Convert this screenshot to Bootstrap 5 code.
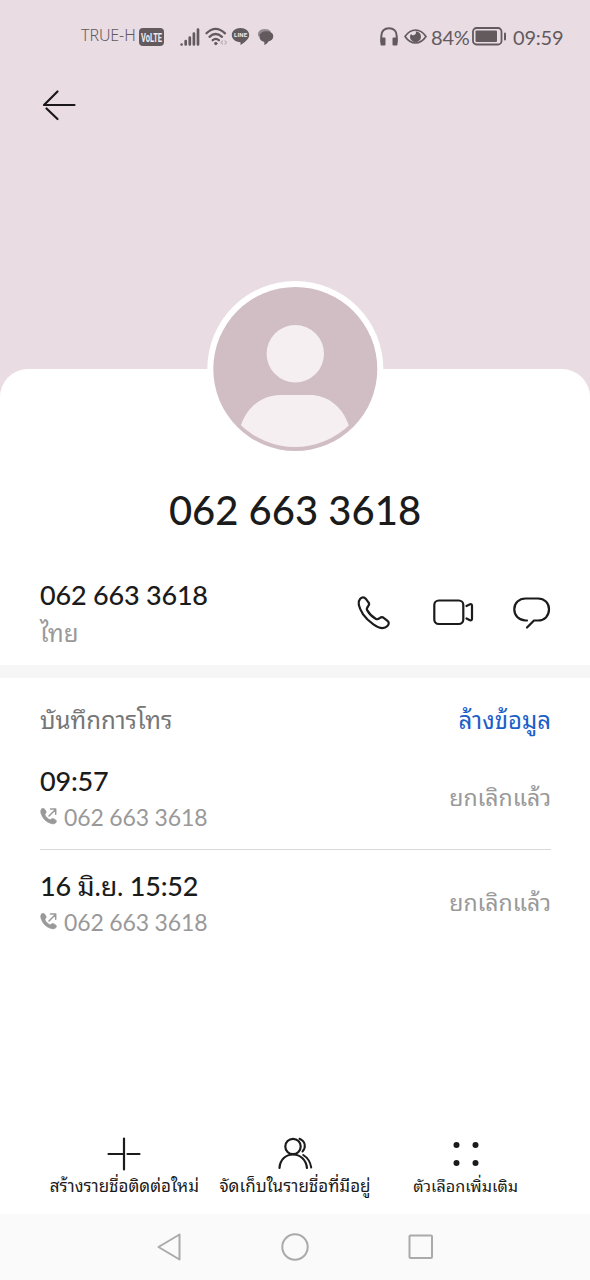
<!DOCTYPE html>
<html lang="th">
<head>
<meta charset="utf-8">
<meta name="viewport" content="width=device-width, initial-scale=1">
<title>062 663 3618</title>
<link href="https://cdn.jsdelivr.net/npm/bootstrap@5.3.0/dist/css/bootstrap.min.css" rel="stylesheet">
<style>
body{font-family:Lato,"Noto Sans Thai Looped","Noto Sans Thai","Noto Sans",sans-serif;color:#1b1b1b;background:#fff}
svg{display:block;overflow:visible;flex:none;fill:none;stroke-linecap:round;stroke-linejoin:round}
.screen{width:590px;height:1280px;background:#e9dde3}
.status{height:73px;padding:0 28px 0 81px;color:#635a5e}
.carrier{font:300 16px/20px "Noto Sans",sans-serif;width:55px;letter-spacing:-.1px;white-space:nowrap;padding-bottom:3px}
.stat-text{font-size:20px;line-height:24px;white-space:nowrap;letter-spacing:-.2px;padding-top:1px}
.topbar{height:296px;padding:15px 42px}
.sheet{border-radius:28px 28px 0 0;background:#fff;height:845px}
.avatar{width:176px;height:176px;margin-top:-89px}
.title{font-size:40px;line-height:48px;font-weight:500;margin-top:30px}
.strong{font-size:27px;line-height:32px;font-weight:500;letter-spacing:-.2px}
.number-row{height:131px;padding:45px 39px 0 40px}
.thai{font-size:24px;line-height:30px;white-space:nowrap}
.result{font-size:23px}
.muted{color:#999}
.sub{font-size:23px;line-height:28px;letter-spacing:-.15px}
.band{height:13px;background:#f6f6f6}
.log{padding:0 39px 0 40px}
.log-head{height:84px;color:#757575}
.clear{color:#1c5ec9}
.entry{height:87px}
.entry+.entry{border-top:1px solid #d9d9d9;height:106px;padding-top:18px}
.actions{padding:0 39px;height:101px}
.action{width:170.67px;font-size:17px;line-height:24px;white-space:nowrap}
.options{font-size:16.2px}
.sysnav{height:66px;background:#fafafa;padding-left:157px}
</style>
<script src="https://cdn.jsdelivr.net/npm/bootstrap@5.3.0/dist/js/bootstrap.bundle.min.js"></script>
</head>
<body>
<main class="screen d-flex flex-column overflow-hidden">
  <div class="status d-flex justify-content-between align-items-center">
    <div class="d-flex align-items-center">
      <span class="carrier">TRUE-H</span>
      <svg style="margin-left:3px" width="25" height="18" viewBox="0 0 25 18"><rect width="25" height="18" rx="4" fill="#635a5e"/><text x="2" y="13.500" font-family="Roboto" font-weight="700" font-size="12" textLength="21" lengthAdjust="spacingAndGlyphs" fill="#f3e9ee">VoLTE</text></svg>
      <svg style="margin-left:16px" width="20" height="18" viewBox="0 0 20 18" stroke="#635a5e" stroke-width="2.700"><path d="M1.600 16.500v0M5.700 13v3.500M9.800 9.500v7M13.900 5.500v11M18 1.500v15"/></svg>
      <svg style="margin-left:5px" width="23" height="19" viewBox="0 0 23 19" stroke="#635a5e" stroke-width="2.300"><path d="M1.500 6.300Q10.500-2.500 20 6.300M4.500 9.800Q10.500 4.200 17 9.800M7.700 13.200Q10.700 10.600 13.900 13.200"/><circle cx="10.800" cy="16.500" r="1.200" fill="#635a5e" stroke-width="1"/><path d="m17.500 14-1.500 1.500 1.500 1.500m2.500-3 1.500 1.500-1.500 1.500" stroke="#bdb2b7" stroke-width="1.200"/></svg>
      <svg style="margin-left:3px" width="19" height="19" viewBox="0 0 19 19"><path d="M9.500 1C14.600 1 18.200 4 18.200 8c0 4-4.500 7.500-8.700 10v-2.800C4.400 15 .8 12 .8 8S4.400 1 9.500 1Z" fill="#635a5e"/><text x="3" y="10.300" font-family="Roboto" font-weight="700" font-size="6" textLength="13" fill="#f3e9ee">LINE</text></svg>
      <svg style="margin-left:7px" width="17" height="18" viewBox="0 0 17 18"><path d="M1.500 8.500C-.5 4.500 3 1 7.500 1c3 0 5 .8 6.500 2.500Z" fill="#958b90"/><path d="M9.500 3.200c4 0 6.800 2 6.800 5 0 2.800-2.200 4.700-5 5.300C10.500 15.300 9 16.500 7 17c.6-1 .6-2 .1-3.300C4.300 13.300 2.400 11.200 2.400 8.400c0-3.200 3-5.200 7.100-5.200Z" fill="#635a5e"/></svg>
    </div>
    <div class="d-flex align-items-center">
      <svg width="18" height="19" viewBox="0 0 18 19" stroke="#635a5e" stroke-width="2"><path d="M1.300 15V9C1.300 4 4.500 1.300 9 1.300S16.700 4 16.700 9v6"/><path d="M1.500 11.500h3v6h-3zM13.500 11.500h3v6h-3z" fill="#635a5e"/></svg>
      <svg style="margin-left:6px" width="23" height="17" viewBox="0 0 23 17" stroke="#635a5e" stroke-width="1.700"><path d="M1 8.500Q5.500 2 11.500 2T22 8.500Q17.500 15 11.500 15T1 8.500Z"/><path d="M11.500 3.200a5.500 5.500 0 1 1-5.500 5.500q0-1.500 1-2.800a2.500 2.500 0 0 0 4.500-2.700Z" fill="#635a5e" stroke="none"/></svg>
      <span class="stat-text" style="margin-left:4px;width:38px">84%</span>
      <svg style="margin-left:3px" width="35" height="19" viewBox="0 0 35 19" stroke="#635a5e"><rect x="1" y="1" width="28.500" height="16.500" rx="3.500" stroke-width="1.800"/><rect x="3.500" y="3.500" width="21.500" height="11.500" rx="1" fill="#635a5e" stroke="none"/><path d="M33 6.500v6" stroke-width="2"/></svg>
      <span class="stat-text" style="margin-left:6px;width:49px">09:59</span>
    </div>
  </div>

  <header class="topbar">
    <svg width="34" height="34" viewBox="0 0 34 34" stroke="#1b1719" stroke-width="2.200"><path d="M15.500 3.500 2 17h30.500M4.500 20.500l11 10.500"/></svg>
  </header>

  <section class="sheet d-flex flex-column">
    <svg class="avatar mx-auto" viewBox="0 0 176 176"><defs><clipPath id="bust"><circle cx="88" cy="89" r="78"/></clipPath></defs><circle cx="88.300" cy="89" r="88" fill="#fff"/><circle cx="88.300" cy="89" r="82" fill="#d0bec4"/><circle cx="88.300" cy="73.700" r="28.700" fill="#f5eff2"/><path d="M34 145C41 125 57 115 73 115h30c16 0 32 10 39 31l-4 30H38Z" fill="#f5eff2" clip-path="url(#bust)"/></svg>
    <h1 class="title text-center mb-0">062 663 3618</h1>
    <div class="number-row d-flex justify-content-between">
      <div>
        <div class="strong">062 663 3618</div>
        <div class="thai muted" style="margin-top:7px">ไทย</div>
      </div>
      <div class="d-flex" style="margin-top:17px">
        <svg width="34" height="34" viewBox="0 0 34 34" stroke="#1b1b1b" stroke-width="2.200"><path d="M3.200 2.800C5 1 7.300 1 8.700 2.700l2.700 3.600c1 1.200.9 2.500-.1 3.700-1.200 1.500-2 2.700-1.200 4.100 2 3.500 5.200 6.800 8.900 8.900 1.400.8 2.600 0 4-1.100 1.200-1 2.500-1.100 3.700-.1l3.800 3c1.700 1.400 1.700 3.500-.1 5.200-3.600 3.700-8.700 2-14-1.700-4.400-3-7.500-6-10.300-10C2.700 13-.4 6.700 3.200 2.800Z"/></svg>
        <svg style="margin-left:42px" width="41" height="34" viewBox="0 0 41 34" stroke="#1b1b1b" stroke-width="2.200"><rect x="1.300" y="4.500" width="29" height="23.500" rx="4.500"/><path d="m33.500 10 3.500-1.700q2-.5 2 1.500v13q0 2-2 1.500L33.500 22.500"/></svg>
        <svg style="margin-left:39px;margin-right:1px" width="37" height="34" viewBox="0 0 37 34" stroke="#1b1b1b" stroke-width="2.200"><path d="M14 24.500H12.500C5.500 24 1.300 19.500 1.300 13.300 1.300 7 6 2.500 12.500 2.500H25c6.500 0 11 4.500 11 10.800C36 20 31.500 24.500 25 24.500h-4l-7 7"/></svg>
      </div>
    </div>
    <div class="band"></div>
    <section class="log">
      <div class="log-head thai d-flex justify-content-between align-items-center">
        <span>บันทึกการโทร</span><span class="clear">ล้างข้อมูล</span>
      </div>
      <div class="entry d-flex justify-content-between">
        <div>
          <div class="strong" style="margin-top:3px">09:57</div>
          <div class="sub muted d-flex" style="margin-top:6px"><svg width="18" height="18" viewBox="0 0 18 18" style="margin:4px 6px 0 0"><path d="M1.500 2Q3.500.5 5 2.500l1 1.800q.7 1.200-.5 2.300Q4.500 7.500 5.500 9q1.500 2 3.500 3.300 1.300.8 2.200-.2 1-1.100 2.200-.5l2.300 1.300q1.600 1 .3 2.700-1.800 2-5 1Q3.500 14.200 1 6.500 0 3.500 1.500 2Z" fill="#999" stroke="#999" stroke-width=".6"/><path d="m9 9 6.500-6.500M10.500 2h5.200v5.200" stroke="#999" stroke-width="1.500"/></svg>062 663 3618</div>
        </div>
        <span class="thai result muted" style="margin-top:20px">ยกเลิกแล้ว</span>
      </div>
      <div class="entry d-flex justify-content-between">
        <div>
          <div class="strong" style="margin-top:2px">16 <span class="fw-normal">มิ.ย.</span> 15:52</div>
          <div class="sub muted d-flex" style="margin-top:6px"><svg width="18" height="18" viewBox="0 0 18 18" style="margin:4px 6px 0 0"><path d="M1.500 2Q3.500.5 5 2.500l1 1.800q.7 1.200-.5 2.300Q4.500 7.500 5.500 9q1.500 2 3.500 3.300 1.300.8 2.200-.2 1-1.100 2.200-.5l2.300 1.300q1.600 1 .3 2.700-1.800 2-5 1Q3.500 14.200 1 6.500 0 3.500 1.500 2Z" fill="#999" stroke="#999" stroke-width=".6"/><path d="m9 9 6.500-6.500M10.500 2h5.200v5.200" stroke="#999" stroke-width="1.500"/></svg>062 663 3618</div>
        </div>
        <span class="thai result muted" style="margin-top:19px">ยกเลิกแล้ว</span>
      </div>
    </section>
    <footer class="actions d-flex mt-auto">
      <div class="action d-flex flex-column align-items-center pt-4">
        <svg width="34" height="34" viewBox="0 0 34 34" stroke="#1b1b1b" stroke-width="2.200" style="margin-bottom:3px"><path d="M17 1.500v31M1.500 17H17M20.500 17h12"/></svg>
        <span>สร้างรายชื่อติดต่อใหม่</span>
      </div>
      <div class="action d-flex flex-column align-items-center pt-4">
        <svg width="34" height="34" viewBox="0 0 34 34" stroke="#1b1b1b" stroke-width="2.200" style="margin-bottom:3px"><circle cx="15" cy="9.500" r="7.700"/><path d="M1.500 31C2 22.500 8 17.500 15 17.500S28 22.500 29 31"/><path d="M21.500 1.800c6.300 2.500 6.600 9 3 12.700M25.200 18c5 3 7.200 7.500 8 12.500" stroke-width="2"/></svg>
        <span>จัดเก็บในรายชื่อที่มีอยู่</span>
      </div>
      <div class="action options d-flex flex-column align-items-center pt-4">
        <svg width="34" height="34" viewBox="0 0 34 34" style="margin-bottom:3px"><g fill="#1b1b1b"><circle cx="7.500" cy="8" r="3"/><circle cx="26.500" cy="8" r="3"/><circle cx="7.500" cy="26" r="3"/><circle cx="26.500" cy="26" r="3"/></g></svg>
        <span>ตัวเลือกเพิ่มเติม</span>
      </div>
    </footer>
  </section>

  <nav class="sysnav d-flex align-items-center">
    <svg width="25" height="28" viewBox="0 0 25 28" stroke="#aaa" stroke-width="2"><path d="M22.500 1.500v25L1.500 14Z"/></svg>
    <svg style="margin-left:99px" width="28" height="28" viewBox="0 0 28 28" stroke="#aaa" stroke-width="2"><circle cx="14" cy="14" r="12.700"/></svg>
    <svg style="margin-left:99px" width="26" height="26" viewBox="0 0 26 26" stroke="#aaa" stroke-width="2"><rect x="1.500" y="1.500" width="22.500" height="22.500" rx="1"/></svg>
  </nav>
</main>
</body>
</html>
